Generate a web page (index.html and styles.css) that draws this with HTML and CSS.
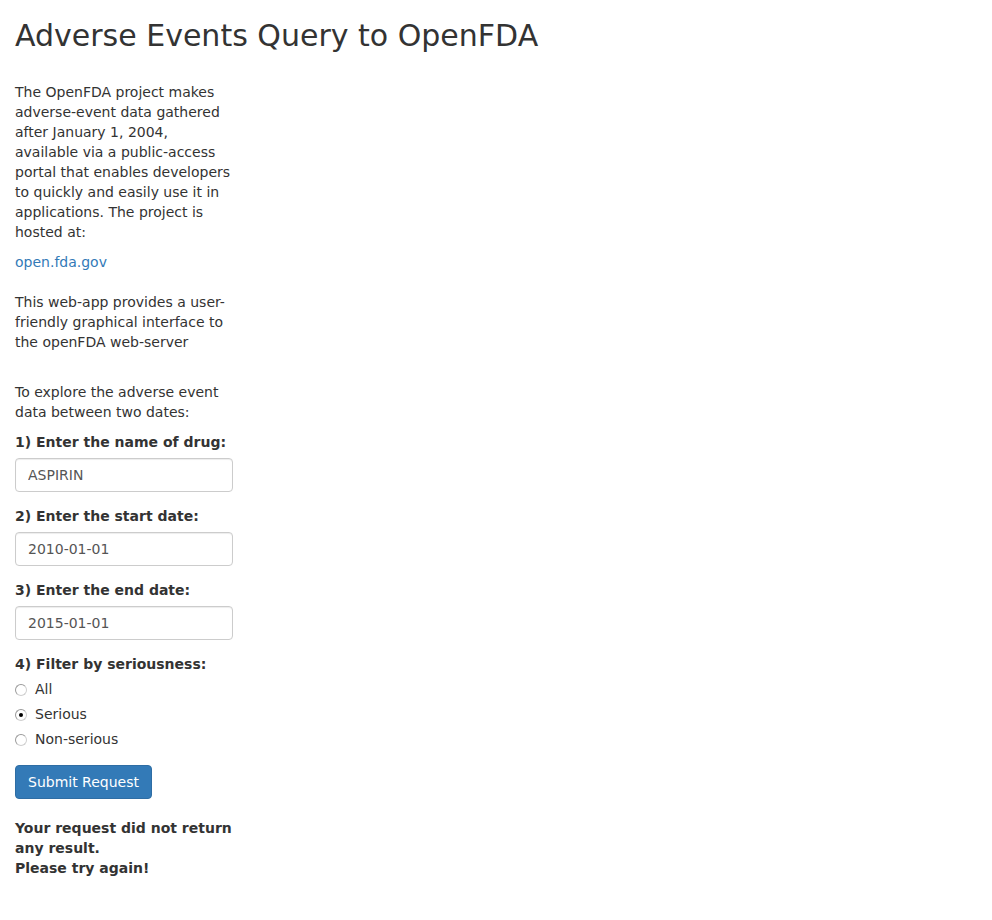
FILE: index.html
```html
<!DOCTYPE html>
<html>
<head>
<meta charset="utf-8">
<title>Adverse Events Query to OpenFDA</title>
<link rel="stylesheet" href="styles.css">
</head>
<body>
<div class="container">
  <h2 class="title">Adverse Events Query to OpenFDA</h2>
  <div class="sidebar">
    <p>The OpenFDA project makes adverse-event data gathered after January 1, 2004, available via a public-access portal that enables developers to quickly and easily use it in applications. The project is hosted at:</p>
    <p><a href="#">open.fda.gov</a></p>
    <p class="gap">This web-app provides a user-friendly graphical interface to the openFDA web-server</p>
    <p class="gap2">To explore the adverse event data between two dates:</p>
    <div class="form-group">
      <label class="control-label" for="drug">1) Enter the name of drug:</label>
      <input class="form-control" id="drug" type="text" value="ASPIRIN">
    </div>
    <div class="form-group">
      <label class="control-label" for="start">2) Enter the start date:</label>
      <input class="form-control" id="start" type="text" value="2010-01-01">
    </div>
    <div class="form-group">
      <label class="control-label" for="end">3) Enter the end date:</label>
      <input class="form-control" id="end" type="text" value="2015-01-01">
    </div>
    <div class="form-group radios">
      <label class="control-label">4) Filter by seriousness:</label>
      <div class="radio"><label><input type="radio" name="ser" value="all"><span>All</span></label></div>
      <div class="radio"><label><input type="radio" name="ser" value="serious" checked><span>Serious</span></label></div>
      <div class="radio"><label><input type="radio" name="ser" value="non"><span>Non-serious</span></label></div>
    </div>
    <button class="btn" type="button">Submit Request</button>
    <div class="result">
      <strong>Your request did not return any result.</strong><br>
      <strong>Please try again!</strong>
    </div>
  </div>
</div>
</body>
</html>
```
FILE: styles.css
```css
* { box-sizing: border-box; }
html, body { margin: 0; padding: 0; background: #fff; }
body {
  font-family: "DejaVu Sans", sans-serif;
  font-size: 14px;
  line-height: 20px;
  color: #333;
}
.container { padding: 0 15px; }
.title {
  font-size: 30px;
  font-weight: normal;
  line-height: 33px;
  margin: 19px 0 10px 0;
}
.sidebar {
  width: 218px;
  margin-top: 30px;
}
p { margin: 0 0 10px 0; }
p.gap { margin-top: 20px; margin-bottom: 30px; }
p.gap2 { margin-bottom: 10px; }
a { color: #337ab7; text-decoration: none; }
.form-group { margin-bottom: 14px; }
.control-label {
  display: inline-block;
  font-weight: bold;
  margin-bottom: 6px;
}
.form-control {
  display: block;
  width: 100%;
  height: 34px;
  padding: 6px 12px;
  font-family: "DejaVu Sans", sans-serif;
  font-size: 14px;
  line-height: 20px;
  color: #555;
  background: #fff;
  border: 1px solid #ccc;
  border-radius: 4px;
  box-shadow: inset 0 1px 1px rgba(0,0,0,0.075);
  outline: none;
}
.radios { margin-bottom: 10px; }
.radios .control-label { margin-bottom: 5px; }
.radio { margin: 0; height: 25px; }
.radio label {
  display: flex;
  align-items: center;
  height: 20px;
  cursor: pointer;
}
.radio input {
  appearance: none;
  -webkit-appearance: none;
  width: 12px;
  height: 12px;
  margin: 2px 8px 0 0;
  border-radius: 50%;
  border: 1px solid #9a9a9a;
  border-right-color: #cfcfcf;
  border-bottom-color: #cfcfcf;
  background: #fff;
  position: relative;
  flex: none;
}
.radio input:checked::after {
  content: "";
  position: absolute;
  left: 3px;
  top: 3px;
  width: 4px;
  height: 4px;
  border-radius: 50%;
  background: #000;
}
.btn {
  display: inline-block;
  margin-top: 1px;
  padding: 6px 12px;
  font-family: "DejaVu Sans", sans-serif;
  font-size: 14px;
  line-height: 20px;
  color: #fff;
  background: #337ab7;
  border: 1px solid #2e6da4;
  border-radius: 4px;
  cursor: pointer;
}
.result { margin-top: 19px; }
```
